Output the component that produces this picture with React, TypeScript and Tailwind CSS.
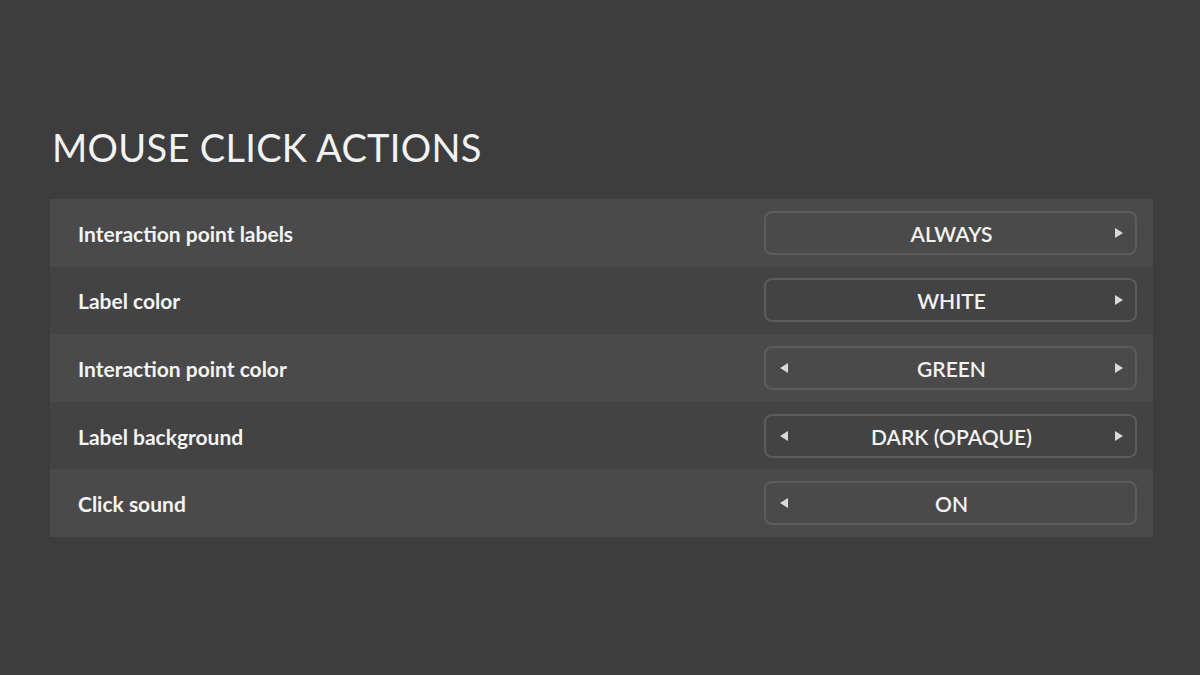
import React from "react";

const rows: { label: string; value: string; left: boolean; right: boolean }[] = [
  { label: "Interaction point labels", value: "ALWAYS", left: false, right: true },
  { label: "Label color", value: "WHITE", left: false, right: true },
  { label: "Interaction point color", value: "GREEN", left: true, right: true },
  { label: "Label background", value: "DARK (OPAQUE)", left: true, right: true },
  { label: "Click sound", value: "ON", left: true, right: false },
];

function Tri({ dir }: { dir: "l" | "r" }) {
  return (
    <svg width="10" height="12" viewBox="0 0 10 12" className="block">
      {dir === "r" ? (
        <path d="M1 1 L9 6 L1 11 Z" fill="#d9d9d9" />
      ) : (
        <path d="M9 1 L1 6 L9 11 Z" fill="#d9d9d9" />
      )}
    </svg>
  );
}

export default function App() {
  return (
    <div
      className="w-[1200px] h-[675px] bg-[#3d3d3d] text-white overflow-hidden"
      style={{ fontFamily: "Lato, 'Noto Sans', sans-serif" }}
    >
      <div className="pt-[124px] px-[50px]">
        <h1 className="text-[38px] leading-[46px] font-normal tracking-[0.3px] text-[#f2f2f2] pl-[2px]">
          MOUSE CLICK ACTIONS
        </h1>
        <div className="mt-[29px] w-[1103px] flex flex-col">
          {rows.map((r, i) => (
            <div
              key={r.label}
              className={`h-[67.6px] flex items-center justify-between pl-[28px] pr-[16px] ${
                i % 2 === 0 ? "bg-[#4a4a4a]" : "bg-[#434343]"
              }`}
            >
              <span className="text-[21px] leading-[26px] font-bold text-[#f4f4f4] translate-y-[1px]">
                {r.label}
              </span>
              <div className="w-[373px] h-[44px] rounded-[8px] border-2 border-[#5c5c5c] flex items-center pl-[12px] pr-[10px]">
                <div className="w-[12px] flex justify-center">{r.left && <Tri dir="l" />}</div>
                <span className="flex-1 text-center text-[21px] leading-[26px] font-semibold text-[#f2f2f2] translate-y-[1px]">
                  {r.value}
                </span>
                <div className="w-[12px] flex justify-center">{r.right && <Tri dir="r" />}</div>
              </div>
            </div>
          ))}
        </div>
      </div>
    </div>
  );
}
